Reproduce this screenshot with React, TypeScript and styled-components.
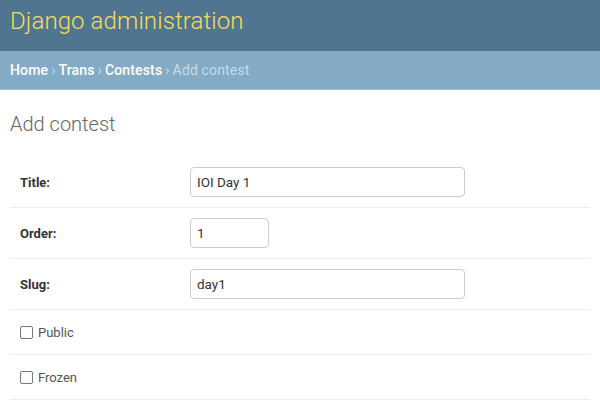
import React from "react";
import styled, { createGlobalStyle } from "styled-components";

const Global = createGlobalStyle`
  html, body { margin: 0; padding: 0; background: #fff; }
  body { font-family: Roboto, "Liberation Sans", sans-serif; font-size: 14px; color: #333; }
  * { box-sizing: border-box; }
`;

const Header = styled.header`
  background: #4f7590;
  padding: 10px;
  height: 51px;
`;

const Branding = styled.h1`
  margin: 0;
  font-size: 24px;
  font-weight: 300;
  line-height: 22px;
  letter-spacing: 0.1px;
  color: #f5dd5d;
`;

const Breadcrumbs = styled.nav`
  background: #83abc6;
  padding: 10px;
  height: 39px;
  font-size: 14px;
  line-height: 19px;
  letter-spacing: 0.15px;
  color: #c4dce8;
  border-bottom: 1px solid #9bbdd3;
`;

const Crumb = styled.a`
  color: #fff;
  text-decoration: none;
  font-weight: 500;
`;

const Sep = styled.span`
  color: #c4dce8;
  margin: 0 3px;
`;

const Content = styled.main`
  padding: 19px 10px 10px;
`;

const Title = styled.h1`
  margin: 0 0 18px;
  font-size: 20px;
  font-weight: 300;
  color: #666;
  line-height: 30px;
`;

const Fieldset = styled.fieldset`
  border: none;
  margin: 0;
  padding: 0;
`;

const Row = styled.div<{ $check?: boolean }>`
  display: flex;
  align-items: center;
  padding: 10px;
  border-bottom: 1px solid #eee;
  min-height: ${(p) => (p.$check ? "45px" : "auto")};
`;

const Label = styled.label`
  width: 170px;
  flex: none;
  font-weight: 700;
  font-size: 13px;
  color: #333;
`;

const Input = styled.input<{ $w: number }>`
  width: ${(p) => p.$w}px;
  height: 30px;
  padding: 5px 6px;
  border: 1px solid #ccc;
  border-radius: 4px;
  font-family: Roboto, "Liberation Sans", sans-serif;
  font-size: 13.5px;
  color: #333;
  outline: none;
  background: #fff;
`;

const CheckLabel = styled.label`
  display: flex;
  align-items: center;
  font-size: 13px;
  color: #555;
`;

const Box = styled.input`
  width: 13px;
  height: 13px;
  margin: 0 5px 0 0;
  appearance: none;
  border: 1px solid #777;
  border-radius: 2px;
  background: #fff;
`;

export default function App() {
  return (
    <>
      <Global />
      <Header>
        <Branding>Django administration</Branding>
      </Header>
      <Breadcrumbs>
        <Crumb href="#">Home</Crumb>
        <Sep>›</Sep>
        <Crumb href="#">Trans</Crumb>
        <Sep>›</Sep>
        <Crumb href="#">Contests</Crumb>
        <Sep>›</Sep>
        Add contest
      </Breadcrumbs>
      <Content>
        <Title>Add contest</Title>
        <Fieldset>
          <Row>
            <Label>Title:</Label>
            <Input $w={275} defaultValue="IOI Day 1" />
          </Row>
          <Row>
            <Label>Order:</Label>
            <Input $w={79} defaultValue="1" />
          </Row>
          <Row>
            <Label>Slug:</Label>
            <Input $w={275} defaultValue="day1" />
          </Row>
          <Row $check>
            <CheckLabel>
              <Box type="checkbox" /> Public
            </CheckLabel>
          </Row>
          <Row $check>
            <CheckLabel>
              <Box type="checkbox" /> Frozen
            </CheckLabel>
          </Row>
        </Fieldset>
      </Content>
    </>
  );
}
